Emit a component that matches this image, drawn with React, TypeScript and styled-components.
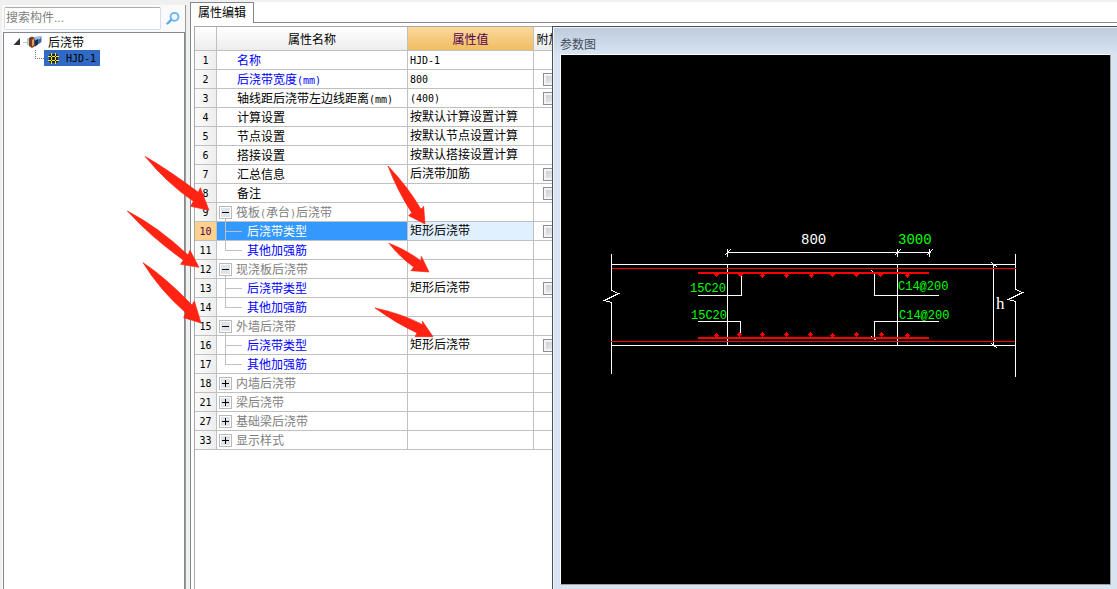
import React from "react";
import styled, { createGlobalStyle, css } from "styled-components";

const Global = createGlobalStyle`
  *, *::before, *::after { box-sizing: border-box; }
  body {
    margin: 0;
    background: #f0f0f0;
    color: #000;
    font: 12px/18px "Liberation Sans", "Noto Sans CJK SC", sans-serif;
  }
`;

const Page = styled.div`
  position: relative;
  display: flex;
  gap: 4px;
  height: 100vh;
  overflow: hidden;
`;

const Half = styled.span`
  font-family: "DejaVu Sans Mono", monospace;
  font-size: 10px;
`;

/** Sets Latin runs in a half-width face so that they take half a CJK cell each. */
function Label({ text }: { text: string }) {
  return (
    <>
      {text.split(/([\x20-\x7e]+)/).map((part, i) =>
        i % 2 ? <Half key={i}>{part}</Half> : part
      )}
    </>
  );
}

/* ---------- component tree ---------- */

const Sidebar = styled.aside`
  flex: 0 0 184px;
  min-width: 0;
  display: flex;
  flex-direction: column;
  margin: 5px 0 0 2px;
  background: #fafafa;
  border-right: 1px solid #9a9a9a;
`;

const SearchBar = styled.form`
  display: flex;
  align-items: center;
  height: 27px;
  padding: 0 0 0 2px;
`;

const SearchInput = styled.input`
  flex: 1;
  min-width: 0;
  height: 23px;
  padding: 0 1px 2px;
  border: 1px solid #d5dcea;
  border-top-color: #abadb3;
  border-radius: 2px;
  background: #fff;
  font: 12px/18px "Liberation Sans", "Noto Sans CJK SC", sans-serif;
  &::placeholder { color: #7f7f7f; opacity: 1; }
`;

const SearchButton = styled.button`
  display: flex;
  width: 24px;
  padding: 0 0 0 5px;
  border: 0;
  background: none;
`;

const Tree = styled.ul`
  flex: 1;
  margin: 0 0 0 1px;
  padding: 1px 0 0 8px;
  border: 1px solid #828790;
  border-bottom: 0;
  background: #fff;
  list-style: none;
`;

const SubTree = styled.ul`
  margin: 0;
  padding: 0 0 0 20px;
  list-style: none;
`;

const TreeRow = styled.div`
  display: flex;
  align-items: center;
  height: 16px;
`;

const TreeText = styled.span`
  padding: 1px 0 0 6px;
`;

const Selected = styled.span`
  display: flex;
  align-items: center;
  gap: 7px;
  height: 16px;
  padding: 0 4px;
  background: #316ac5;
`;

/* ---------- property editor ---------- */

const Editor = styled.main`
  flex: 1;
  min-width: 0;
  display: flex;
  flex-direction: column;
  padding-top: 2px;
`;

const TabBar = styled.div`
  display: flex;
  height: 21px;
  background: #fff;
`;

const Tab = styled.button`
  width: 64px;
  padding: 0;
  border: 1px solid #828790;
  border-bottom: 0;
  background: #fff;
  color: #000;
  font: 12px/18px "Liberation Sans", "Noto Sans CJK SC", sans-serif;
`;

const TabFill = styled.div`
  flex: 1;
  border-bottom: 1px solid #828790;
`;

const EditorBody = styled.div`
  flex: 1;
  min-height: 0;
  display: flex;
  padding: 3px 0 0 3px;
  border-left: 1px solid #828790;
  background: #fff;
`;

const GridPane = styled.div`
  flex: 0 0 358px;
  overflow: hidden;
  border-left: 1px solid #a8a8a8;
  border-top: 1px solid #a8a8a8;
`;

const Grid = styled.table`
  table-layout: fixed;
  width: 369px;
  border-spacing: 0;
`;

const edge = css`
  border-right: 1px solid #c0c0c0;
  border-bottom: 1px solid #c0c0c0;
`;

const HeadCell = styled.th<{ $current?: boolean }>`
  ${edge}
  height: 24px;
  padding: 3px 0 0;
  font-weight: normal;
  white-space: nowrap;
  color: ${(p) => (p.$current ? "#500050" : "#000")};
  background: ${(p) =>
    p.$current
      ? "linear-gradient(#fbd99c, #f2bd61)"
      : "linear-gradient(#fff, #ededed)"};
`;

const NumberCell = styled.th<{ $current: boolean }>`
  ${edge}
  height: 19px;
  padding: 0;
  font-weight: normal;
  color: ${(p) => (p.$current ? "#500050" : "#000")};
  background: ${(p) =>
    p.$current ? "#ffd28c" : "linear-gradient(90deg, #fbfbfb, #eee)"};
`;

const nameColors = { blue: "#0000ff", black: "#000", gray: "#808080" };
type Tone = keyof typeof nameColors;

const Cell = styled.td<{ $bg?: string }>`
  ${edge}
  height: 19px;
  padding: 0;
  background: ${(p) => p.$bg ?? "#fff"};
`;

const NameLine = styled.div<{ $color: string; $indent: number }>`
  display: flex;
  height: 18px;
  padding-left: ${(p) => p.$indent}px;
  color: ${(p) => p.$color};
  white-space: nowrap;
`;

const NameText = styled.span`
  padding-left: 4px;
  line-height: 21px;
`;

const Value = styled.div`
  height: 18px;
  padding-left: 2px;
  line-height: 19px;
  white-space: nowrap;
`;

const RowNumber = styled.div`
  height: 18px;
  line-height: 19px;
`;

const Expander = styled.button`
  display: flex;
  padding: 0;
  border: 0;
  background: none;
`;

const Check = styled.input`
  appearance: none;
  display: block;
  width: 13px;
  height: 13px;
  margin: 0 0 0 9px;
  border: 1px solid #8e8f8f;
  background: linear-gradient(135deg, #c2c6cd, #f4f5f6);
  box-shadow: inset 0 0 0 2px #f4f4f4;
`;

/* ---------- parameter window ---------- */

const Dialog = styled.section`
  flex: 1;
  min-width: 0;
  display: flex;
  flex-direction: column;
  padding: 0 6px 4px 7px;
  border-left: 1px solid #4b4f55;
  border-top: 1px solid #4b4f55;
  background: linear-gradient(#bccbdb, #d8e4f2 28px);
  box-shadow: inset 1px 1px 0 #eef3f8;
`;

const DialogTitle = styled.h2`
  margin: 0;
  height: 27px;
  padding-top: 8px;
  color: #414c59;
  font: 12px/18px "Noto Sans CJK SC", sans-serif;
`;

const Canvas = styled.div`
  flex: 1;
  min-height: 0;
  display: flex;
  border: 1px solid #fff;
  border-right-color: #a0a0a0;
  border-bottom-color: #a0a0a0;
  background: #000;
`;

const Drawing = styled.svg`
  flex: 1;
  min-width: 0;
  width: 100%;
  height: 100%;
  font-family: "Liberation Mono", monospace;
`;

const Arrows = styled.svg`
  position: absolute;
  left: 0;
  top: 0;
  width: 100%;
  height: 100%;
  pointer-events: none;
`;

type Row = {
  no: number;
  name: string;
  value?: string;
  tone: Tone;
  kind?: "open" | "closed" | "child" | "last";
  check?: boolean;
  current?: boolean;
};

const TYPE = "后浇带类型";
const EXTRA = "其他加强筋";
const RECT = "矩形后浇带";

const rows: Row[] = [
  { no: 1, name: "名称", value: "HJD-1", tone: "blue" },
  { no: 2, name: "后浇带宽度(mm)", value: "800", tone: "blue", check: true },
  { no: 3, name: "轴线距后浇带左边线距离(mm)", value: "(400)", tone: "black", check: true },
  { no: 4, name: "计算设置", value: "按默认计算设置计算", tone: "black" },
  { no: 5, name: "节点设置", value: "按默认节点设置计算", tone: "black" },
  { no: 6, name: "搭接设置", value: "按默认搭接设置计算", tone: "black" },
  { no: 7, name: "汇总信息", value: "后浇带加筋", tone: "black", check: true },
  { no: 8, name: "备注", tone: "black", check: true },
  { no: 9, name: "筏板(承台)后浇带", tone: "gray", kind: "open" },
  { no: 10, name: TYPE, value: RECT, tone: "blue", kind: "child", check: true, current: true },
  { no: 11, name: EXTRA, tone: "blue", kind: "last" },
  { no: 12, name: "现浇板后浇带", tone: "gray", kind: "open" },
  { no: 13, name: TYPE, value: RECT, tone: "blue", kind: "child", check: true },
  { no: 14, name: EXTRA, tone: "blue", kind: "last" },
  { no: 15, name: "外墙后浇带", tone: "gray", kind: "open" },
  { no: 16, name: TYPE, value: RECT, tone: "blue", kind: "child", check: true },
  { no: 17, name: EXTRA, tone: "blue", kind: "last" },
  { no: 18, name: "内墙后浇带", tone: "gray", kind: "closed" },
  { no: 21, name: "梁后浇带", tone: "gray", kind: "closed" },
  { no: 27, name: "基础梁后浇带", tone: "gray", kind: "closed" },
  { no: 33, name: "显示样式", tone: "gray", kind: "closed" },
];

function NameContent({ row }: { row: Row }) {
  const color = row.current ? "#fff" : nameColors[row.tone];
  const group = row.kind === "open" || row.kind === "closed";
  const child = row.kind === "child" || row.kind === "last";
  return (
    <NameLine $color={color} $indent={group ? 2 : child ? 8 : 16}>
      {group && (
        <Expander type="button" aria-label={row.name} aria-expanded={row.kind === "open"}>
          <svg width="13" height="18" shapeRendering="crispEdges">
            <rect x="0.5" y="3.5" width="12" height="12" fill="#fff" stroke="#b9b9b9" />
            <rect x="2" y="5" width="9" height="9" fill="#dfe3ea" />
            <path d={row.kind === "open" ? "M3 9.5h7" : "M3 9.5h7M6.5 6v7"} stroke="#000" />
            {row.kind === "open" && <path d="M6.5 16v2" stroke="#c0c0c0" />}
          </svg>
        </Expander>
      )}
      {child && (
        <svg width="18" height="18" shapeRendering="crispEdges" fill="none" stroke="#c0c0c0">
          <path d={row.kind === "child" ? "M0.5 0v18M0 9.5h17" : "M0.5 0v9.5h16.5"} />
        </svg>
      )}
      <NameText><Label text={row.name} /></NameText>
    </NameLine>
  );
}

const topBars: [number, boolean][] = [
  [716, true], [740, true], [762, false], [786, false], [811, false],
  [832, true], [856, true], [880, true], [907, false],
];
const bottomBars: [number, number][] = [
  [716, 335], [739, 334], [762, 334], [786, 334], [810, 334],
  [832, 335], [856, 334], [881, 334], [907, 335],
];

function Section() {
  return (
    <Drawing viewBox="561 55 549 529" role="img" aria-label="参数图">
      <g transform="translate(.5 .5)" fill="none" stroke="#fff" shapeRendering="crispEdges">
        <path d="M611 253V290L618 293L604 300L611 302V373" />
        <path d="M1015 253V289L1022 292L1008 299L1015 301V376" />
        <path d="M611 264H1014M611 345H1014M727 264V345M897 264V345" />
        <path d="M727 252H930M727 248V256M897 248V256M929 248V256M724 255L730 249M894 255L900 249M926 255L932 249" />
        <path d="M993 264V345M991 262L997 267M991 343L997 348" />
        <path d="M611 268H1015M610 341H1014" stroke="#f00" />
        <path d="M697 295H741V275M697 321H740V333" />
        <path d="M938 295H874V273M871 270L875 274M938 321H874V338M871 336L876 340" />
      </g>
      <g fill="#f00" shapeRendering="crispEdges">
        <path d="M698 272H929V274H698ZM698 337H929V339H698Z" />
        {topBars.map(([x, half]) => (
          <path
            key={x}
            d={half ? `M${x - 2} 274h5v1h-1v1h-1v1h-1v-1h-1v-1h-1z` : `M${x - 2} 275h1v-1h3v1h1v1h-1v1h-1v1h-1v-1h-1v-1h-1z`}
          />
        ))}
        {bottomBars.map(([x, y]) => (
          <path key={x} d={`M${x} ${y - 2}h1v1h1v1h1v1h-1v1h-1v1h-1v-1h-1v-1h-1v-1h1v-1h1z`} />
        ))}
      </g>
      <g fill="#0f0" fontSize="12">
        <text x="690" y="292">15C20</text>
        <text x="691" y="319">15C20</text>
        <text x="898" y="290">C14@200</text>
        <text x="899" y="319">C14@200</text>
        <text x="898" y="244" fontSize="14">3000</text>
      </g>
      <g fill="#fff">
        <text x="801" y="244" fontSize="14">800</text>
        <text x="996" y="309" fontSize="17" fontFamily="Liberation Serif, serif">h</text>
      </g>
    </Drawing>
  );
}

function Callouts() {
  return (
    <Arrows aria-hidden="true">
      <g fill="#ff2313" stroke="#ff2313" strokeWidth="2" strokeLinejoin="round">
        <g transform="translate(120 145) scale(.3333)">
          <path d="M75 34Q150 78 235 142L241 128L267 196L212 184L220 169Q138 112 75 34Z" />
          <path d="M22 198Q115 246 204 330L210 316L237 367L182 358L190 345Q95 278 22 198Z" />
          <path d="M69 353Q135 396 216 480L223 468L243 534L191 518L198 504Q120 436 69 353Z" />
        </g>
        <g transform="translate(370 150) scale(.3333)">
          <path d="M54 48Q112 108 153 178L161 169L165 222L116 197L125 188Q83 124 54 48Z" />
          <path d="M57 280Q110 300 153 333L154 319L177 366L123 362L131 351Q90 322 57 280Z" />
          <path d="M15 474Q92 490 158 524L157 513L189 560L135 560L141 549Q78 520 15 474Z" />
        </g>
      </g>
    </Arrows>
  );
}

export default function App() {
  return (
    <Page>
      <Global />
      <Sidebar>
        <SearchBar onSubmit={(e) => e.preventDefault()}>
          <SearchInput type="text" size={4} aria-label="搜索构件" placeholder="搜索构件..." />
          <SearchButton type="submit" aria-label="搜索">
            <svg width="15" height="15" viewBox="0 0 15 15" fill="none">
              <path d="M1.5 12.5L5 9" stroke="#5aa9e6" strokeWidth="2.4" strokeLinecap="round" />
              <circle cx="8.5" cy="5.8" r="4" fill="#eaf6ff" stroke="#68b4ee" strokeWidth="1.8" />
            </svg>
          </SearchButton>
        </SearchBar>
        <Tree>
          <li>
            <TreeRow>
              <svg width="30" height="16" viewBox="12 34 30 16">
                <path d="M20 38V45H13.500Z" fill="#333" />
                <path d="M23.500 42.500H27" stroke="#888" strokeDasharray="1 1" />
                <path d="M27 38.500L31 37V46L27 45Z" fill="#b9cbe0" />
                <path d="M29 38L32 36.500L35 38V46L32 48L29 46Z" fill="#7a3d1c" />
                <path d="M32 40L34 38.500V45L32 46.500Z" fill="#e0a25c" />
                <path d="M34 37L41.500 36.500V42L35 46.500Z" fill="#3f68a8" />
                <path d="M34 37L41.500 36.500L40 39L35 40Z" fill="#9fbbe0" />
                <path d="M35 41L38 39V44L35 46.500Z" fill="#182a50" />
              </svg>
              <TreeText>后浇带</TreeText>
            </TreeRow>
            <SubTree>
              <li>
                <TreeRow>
                  <svg width="12" height="16" fill="none" stroke="#777" strokeDasharray="1 1" shapeRendering="crispEdges">
                    <path d="M3.500 0V8.500H12" />
                  </svg>
                  <Selected>
                    <svg width="11" height="11" viewBox="0 0 11 11" fill="none" shapeRendering="crispEdges">
                      <path d="M2 1h7v1h1v7h-1v1h-7v-1h-1v-7h1z" fill="#222" />
                      <path
                        d="M3.500 0V11M7.500 0V11M0 3.500H11M0 7.500H11"
                        stroke="#ffee20"
                      />
                      <path d="M3 3h1v1h-1zM7 3h1v1h-1zM3 7h1v1h-1zM7 7h1v1h-1z" fill="#222" />
                    </svg>
                    <span><Label text="HJD-1" /></span>
                  </Selected>
                </TreeRow>
              </li>
            </SubTree>
          </li>
        </Tree>
      </Sidebar>
      <Editor>
        <TabBar role="tablist">
          <Tab type="button" role="tab" aria-selected="true">属性编辑</Tab>
          <TabFill />
        </TabBar>
        <EditorBody>
          <GridPane>
            <Grid>
              <colgroup>
                <col width="22" />
                <col width="191" />
                <col width="126" />
                <col width="30" />
              </colgroup>
              <thead>
                <tr>
                  <HeadCell />
                  <HeadCell scope="col">属性名称</HeadCell>
                  <HeadCell scope="col" $current>属性值</HeadCell>
                  <HeadCell scope="col">附加</HeadCell>
                </tr>
              </thead>
              <tbody>
                {rows.map((row) => (
                  <tr key={row.no}>
                    <NumberCell scope="row" $current={!!row.current}>
                      <RowNumber><Label text={String(row.no)} /></RowNumber>
                    </NumberCell>
                    <Cell $bg={row.current ? "#3399ff" : undefined}>
                      <NameContent row={row} />
                    </Cell>
                    <Cell $bg={row.current ? "#e0f0ff" : undefined}>
                      {row.value && <Value><Label text={row.value} /></Value>}
                    </Cell>
                    <Cell>
                      {row.check && <Check type="checkbox" aria-label={`附加 ${row.name}`} />}
                    </Cell>
                  </tr>
                ))}
              </tbody>
            </Grid>
          </GridPane>
          <Dialog aria-label="参数图">
            <DialogTitle>参数图</DialogTitle>
            <Canvas>
              <Section />
            </Canvas>
          </Dialog>
        </EditorBody>
      </Editor>
      <Callouts />
    </Page>
  );
}
